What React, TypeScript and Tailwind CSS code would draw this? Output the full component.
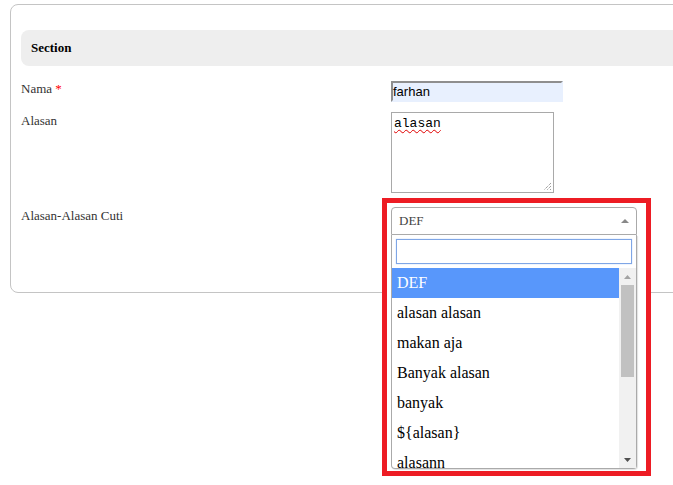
import React from "react";

const options = ["DEF", "alasan alasan", "makan aja", "Banyak alasan", "banyak", "${alasan}", "alasann", "cuti"];

function Select2Open() {
  return (
    <div className="relative z-20 w-[246px]">
      {/* selection box */}
      <div className="flex h-[28px] items-center justify-between rounded-t-[4px] border border-[#aaaaaa] bg-white pl-[7px] pr-[6px] text-[13px] text-[#444444]">
        <span>DEF</span>
        <svg width="8" height="4" viewBox="0 0 8 4" className="mr-[1px]">
          <path d="M0 4 L4 0 L8 4 Z" fill="#888888" />
        </svg>
      </div>

      {/* dropdown */}
      <div className="absolute left-0 top-[28px] w-[246px] rounded-b-[4px] border border-t-0 border-[#aaaaaa] bg-white shadow-[1px_1px_1px_rgba(0,0,0,0.12)]">
        <div className="p-[4px]">
          <div className="h-[25px] w-full border border-[#7fa6e6] bg-white shadow-[0_0_1px_#9ec0f5]" />
        </div>
        <div className="flex h-[200px]">
          <ul className="h-[200px] flex-1 overflow-hidden">
            {options.map((o, i) => (
              <li
                key={o}
                className={
                  i === 0
                    ? "flex h-[30px] items-center bg-[#5897fb] pl-[5px] text-[16px] text-white"
                    : "flex h-[30px] items-center pl-[5px] text-[16px] text-black"
                }
              >
                {o}
              </li>
            ))}
          </ul>
          {/* scrollbar */}
          <div className="flex h-[200px] w-[17px] flex-col items-center bg-[#f1f1f1]">
            <div className="flex h-[17px] items-center justify-center">
              <svg width="7" height="4" viewBox="0 0 7 4">
                <path d="M0 4 L3.5 0 L7 4 Z" fill="#a3a3a3" />
              </svg>
            </div>
            <div className="h-[92px] w-[13px] bg-[#c1c1c1]" />
            <div className="flex-1" />
            <div className="flex h-[17px] items-center justify-center">
              <svg width="7" height="4" viewBox="0 0 7 4">
                <path d="M0 0 L3.5 4 L7 0 Z" fill="#505050" />
              </svg>
            </div>
          </div>
        </div>
      </div>
    </div>
  );
}

export default function App() {
  return (
    <div className="relative h-[485px] w-[673px] overflow-hidden bg-white font-['Liberation_Serif',serif]">
      {/* card */}
      <div className="ml-[10px] mt-[4px] w-[720px] rounded-[8px] border border-[#c4c4c4] pb-[57px] pl-[10px] pt-[25px]">
        <div className="flex h-[36px] items-center rounded-[8px] bg-[#eeeeee] pl-[10px] text-[13px] font-bold text-black">
          Section
        </div>

        <div className="mt-[15px] flex items-start">
          <label className="w-[370px] text-[13px] leading-[15px] text-[#333333]">
            Nama <span className="text-[#ff0000]">*</span>
          </label>
          <div className="h-[21px] w-[172px] border-2 border-b-[#e8f0fe] border-l-[#8e8e8e] border-r-[#e8f0fe] border-t-[#8e8e8e] bg-[#e8f0fe] font-['Liberation_Sans',sans-serif] text-[13px] leading-[17px] text-black">
            farhan
          </div>
        </div>

        <div className="mt-[10px] flex items-start">
          <label className="w-[370px] pt-[1px] text-[13px] leading-[15px] text-[#333333]">Alasan</label>
          <div className="relative h-[81px] w-[163px] border border-[#a9a9a9] px-[2px] pt-[3px] font-['Liberation_Mono',monospace] text-[13px] leading-[15px] text-black">
            <span className="underline decoration-[#e00000] decoration-wavy decoration-1 underline-offset-2">alasan</span>
            <svg width="9" height="9" viewBox="0 0 9 9" className="absolute bottom-[1px] right-[1px]">
              <path d="M8 1 L1 8 M8 4 L4 8 M8 7 L7 8" stroke="#777777" strokeWidth="1" strokeDasharray="1 1" />
            </svg>
          </div>
        </div>

        <div className="mt-[14px] flex items-start">
          <label className="w-[370px] pt-[1px] text-[13px] leading-[15px] text-[#333333]">Alasan-Alasan Cuti</label>
          <Select2Open />
        </div>
      </div>

      {/* red annotation frame */}
      <div className="absolute left-[382px] top-[198px] z-10 h-[278px] w-[269px] border-[5px] border-[#ed1c24] bg-white" />
    </div>
  );
}
